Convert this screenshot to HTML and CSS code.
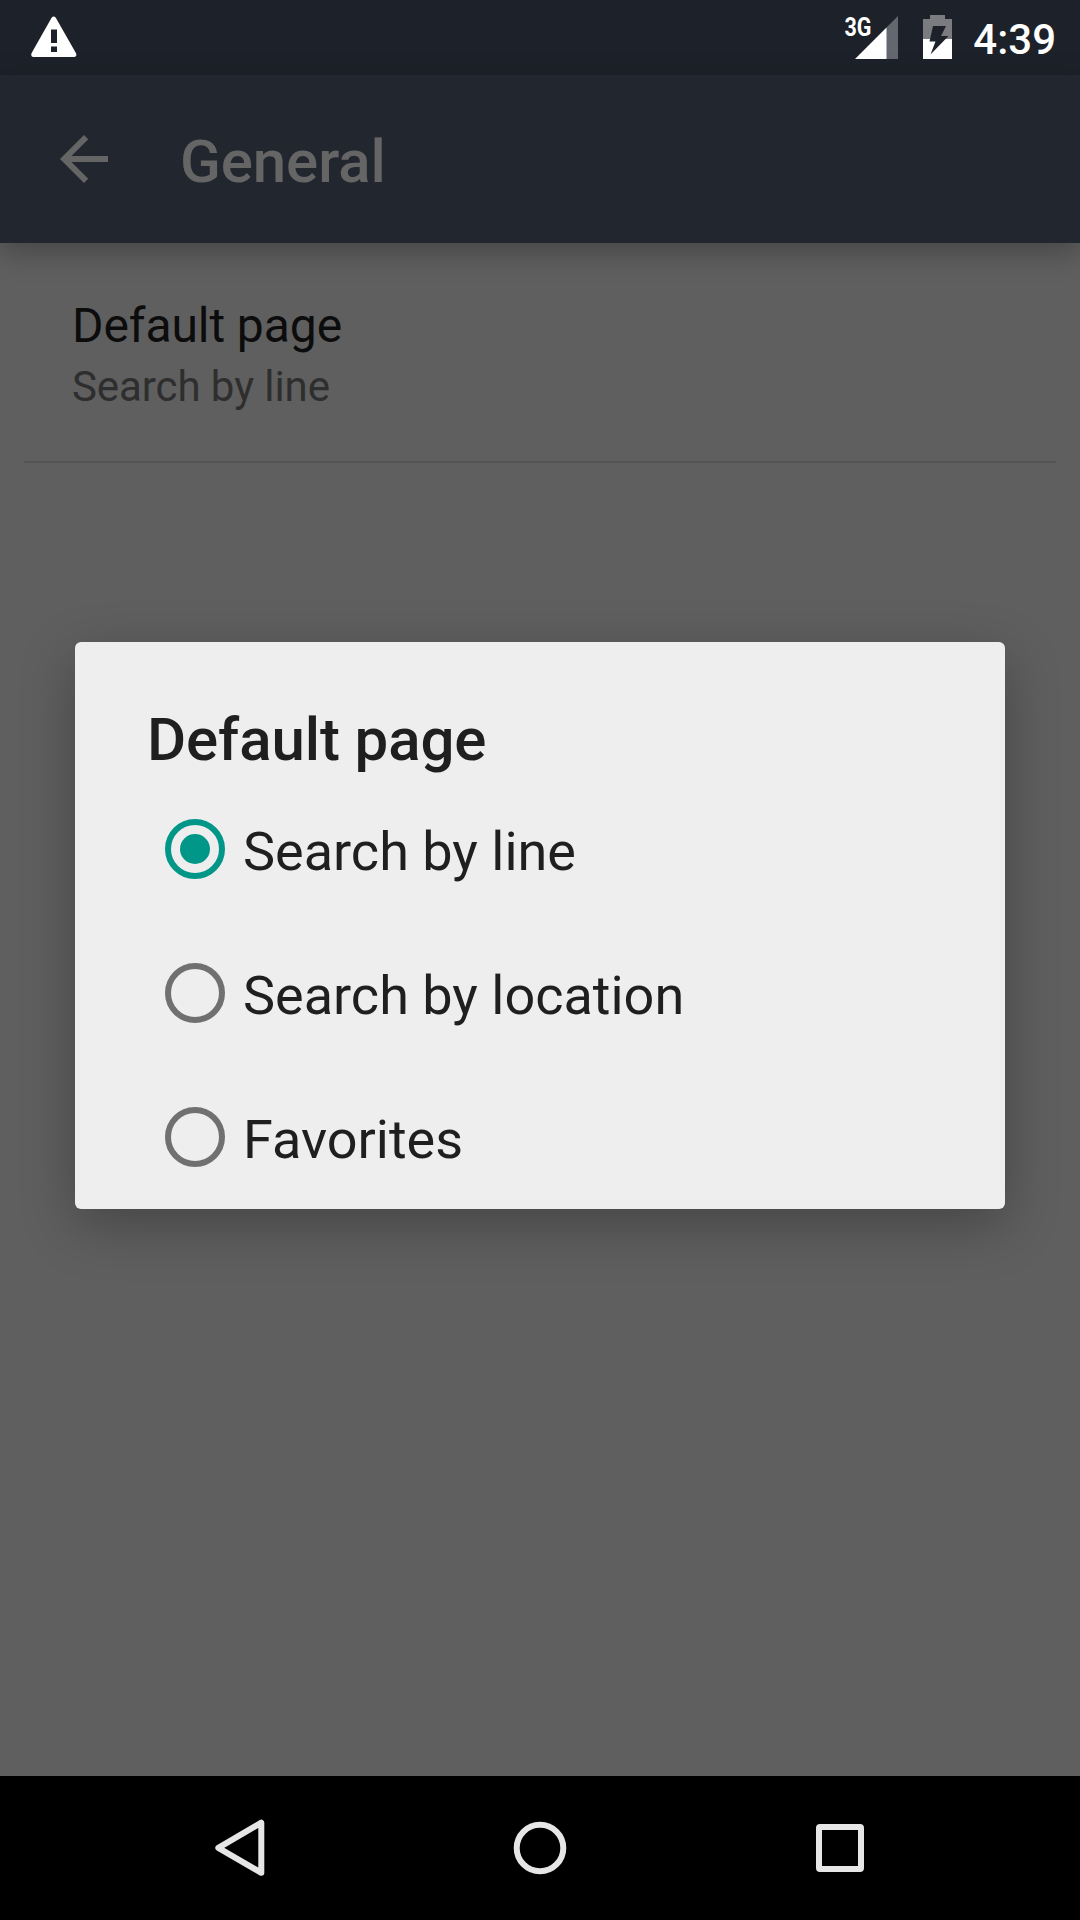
FILE: index.html
```html
<!DOCTYPE html>
<html lang="en">
<head>
<meta charset="utf-8">
<title>General</title>
<link rel="stylesheet" href="styles.css">
</head>
<body>
<div class="screen">
  <header class="status-bar">
    <svg class="warning" width="46" height="42" viewBox="0 0 46 42">
      <path fill="#fff" fill-rule="evenodd" d="M20.6 1.8Q22.7-1 24.8 1.8L45 37.2Q46.3 40.5 43.5 41H2Q-.5 40.5.5 37.2ZM20 13.5V27H26V13.5ZM20 30.5V36H26V30.5Z"/>
    </svg>
    <div class="indicators">
      <svg class="signal" width="58" height="50" viewBox="-4 -6 58 50">
        <path fill="#636770" d="M53 1V44H41V13Z"/>
        <path fill="#fff" d="M10 44L41.5 12.5V44Z"/>
        <text class="network" x="-0.5" y="20.5" textLength="27" lengthAdjust="spacingAndGlyphs">3G</text>
      </svg>
      <svg class="battery" width="29" height="44" viewBox="0 0 29 44">
        <path fill="#7a7c80" d="M7 0H22V4H29V24H0V4H7Z"/>
        <path fill="#fff" d="M0 24H29V44H0Z"/>
        <path fill="#1d2129" d="M10 11H23L18 21H25.5L7.5 39.5L12.5 26.5H6.5Z"/>
      </svg>
      <span class="clock">4:39</span>
    </div>
  </header>
  <div class="toolbar">
    <svg class="back" width="48" height="48" viewBox="0 0 16 16">
      <path fill="#656565" d="M16 7H3.83L9.42 1.41 8 0 0 8l8 8 1.41-1.41L3.83 9H16Z"/>
    </svg>
    <h1 class="title">General</h1>
  </div>
  <main class="content">
    <div class="preference">
      <div class="preference-name">Default page</div>
      <div class="preference-value">Search by line</div>
    </div>
  </main>
  <nav class="nav-bar">
    <svg width="60" height="60" viewBox="0 0 60 60"><path class="nav-shape" d="M51.3 4.7V54.8L8.3 29.8Z"/></svg>
    <svg width="60" height="60" viewBox="0 0 60 60"><circle class="nav-shape" cx="30" cy="30" r="23.3"/></svg>
    <svg width="60" height="60" viewBox="0 0 60 60"><rect class="nav-shape" x="9" y="9" width="42" height="42" rx="1"/></svg>
  </nav>
  <section class="dialog" role="dialog">
    <h2 class="dialog-title">Default page</h2>
    <div class="option">
      <svg width="60" height="60" viewBox="0 0 60 60"><circle class="ring ring-on" cx="30" cy="30" r="27"/><circle class="dot" cx="30" cy="30" r="15"/></svg>
      <span class="option-label">Search by line</span>
    </div>
    <div class="option">
      <svg width="60" height="60" viewBox="0 0 60 60"><circle class="ring" cx="30" cy="30" r="27"/></svg>
      <span class="option-label">Search by location</span>
    </div>
    <div class="option">
      <svg width="60" height="60" viewBox="0 0 60 60"><circle class="ring" cx="30" cy="30" r="27"/></svg>
      <span class="option-label">Favorites</span>
    </div>
  </section>
</div>
</body>
</html>
```
FILE: styles.css
```css
* { box-sizing: border-box; }
body { margin: 0; font-family: Roboto, sans-serif; background: #000; }
svg { display: block; flex: none; }
h1, h2 { margin: 0; font-weight: 500; letter-spacing: -0.1px; }

.screen {
  position: relative;
  width: 1080px;
  height: 1920px;
  overflow: hidden;
  display: flex;
  flex-direction: column;
  background: #5f5f5f;
}

.status-bar {
  height: 75px;
  flex: none;
  display: flex;
  justify-content: space-between;
  align-items: flex-start;
  padding: 0 24px 0 31px;
  background: #1d2129;
}
.warning { margin-top: 16px; }
.indicators { display: flex; align-items: flex-start; }
.signal { margin: 9px 24px 0 0; }
.network { font-size: 25px; font-weight: 700; fill: #fff; }
.battery { margin: 15px 21px 0 0; }
.clock {
  padding-top: 5px;
  line-height: 70px;
  font-size: 42px;
  font-weight: 500;
  color: #fff;
}

.toolbar {
  height: 168px;
  flex: none;
  display: flex;
  align-items: center;
  gap: 72px;
  padding-left: 60px;
  background: #22262f;
  box-shadow: 0 8px 28px rgba(0, 0, 0, 0.28);
}
.title { padding-top: 5px; font-size: 60px; line-height: 70px; color: #656565; }

.content { flex: 1; padding: 0 24px; }
.preference {
  display: flex;
  flex-direction: column;
  gap: 8px;
  padding: 55px 48px 49px;
  letter-spacing: -0.08px;
  border-bottom: 2px solid #555;
}
.preference-name { font-size: 48px; line-height: 56px; color: #0c0c0c; }
.preference-value { font-size: 42px; line-height: 50px; color: #2e2e2e; }

.nav-bar {
  height: 144px;
  flex: none;
  display: flex;
  justify-content: space-between;
  align-items: center;
  padding: 0 210px;
  background: #000;
}
.nav-shape { fill: none; stroke: #e6e6e6; stroke-width: 6; stroke-linejoin: round; }

.dialog {
  position: absolute;
  left: 75px;
  top: 642px;
  width: 930px;
  height: 567px;
  padding: 63px 72px 0;
  border-radius: 6px;
  background: #eee;
  box-shadow: 0 16px 54px rgba(0, 0, 0, 0.27);
}
.dialog-title { margin-bottom: 2px; font-size: 60px; line-height: 70px; color: #1f1f1f; }
.option {
  height: 144px;
  display: flex;
  align-items: center;
  gap: 18px;
  padding-left: 18px;
}
.option-label { padding-top: 5px; font-size: 54px; line-height: 64px; color: #1f1f1f; }
.ring { fill: none; stroke: #707070; stroke-width: 6; }
.ring-on { stroke: #009688; }
.dot { fill: #009688; }
```
